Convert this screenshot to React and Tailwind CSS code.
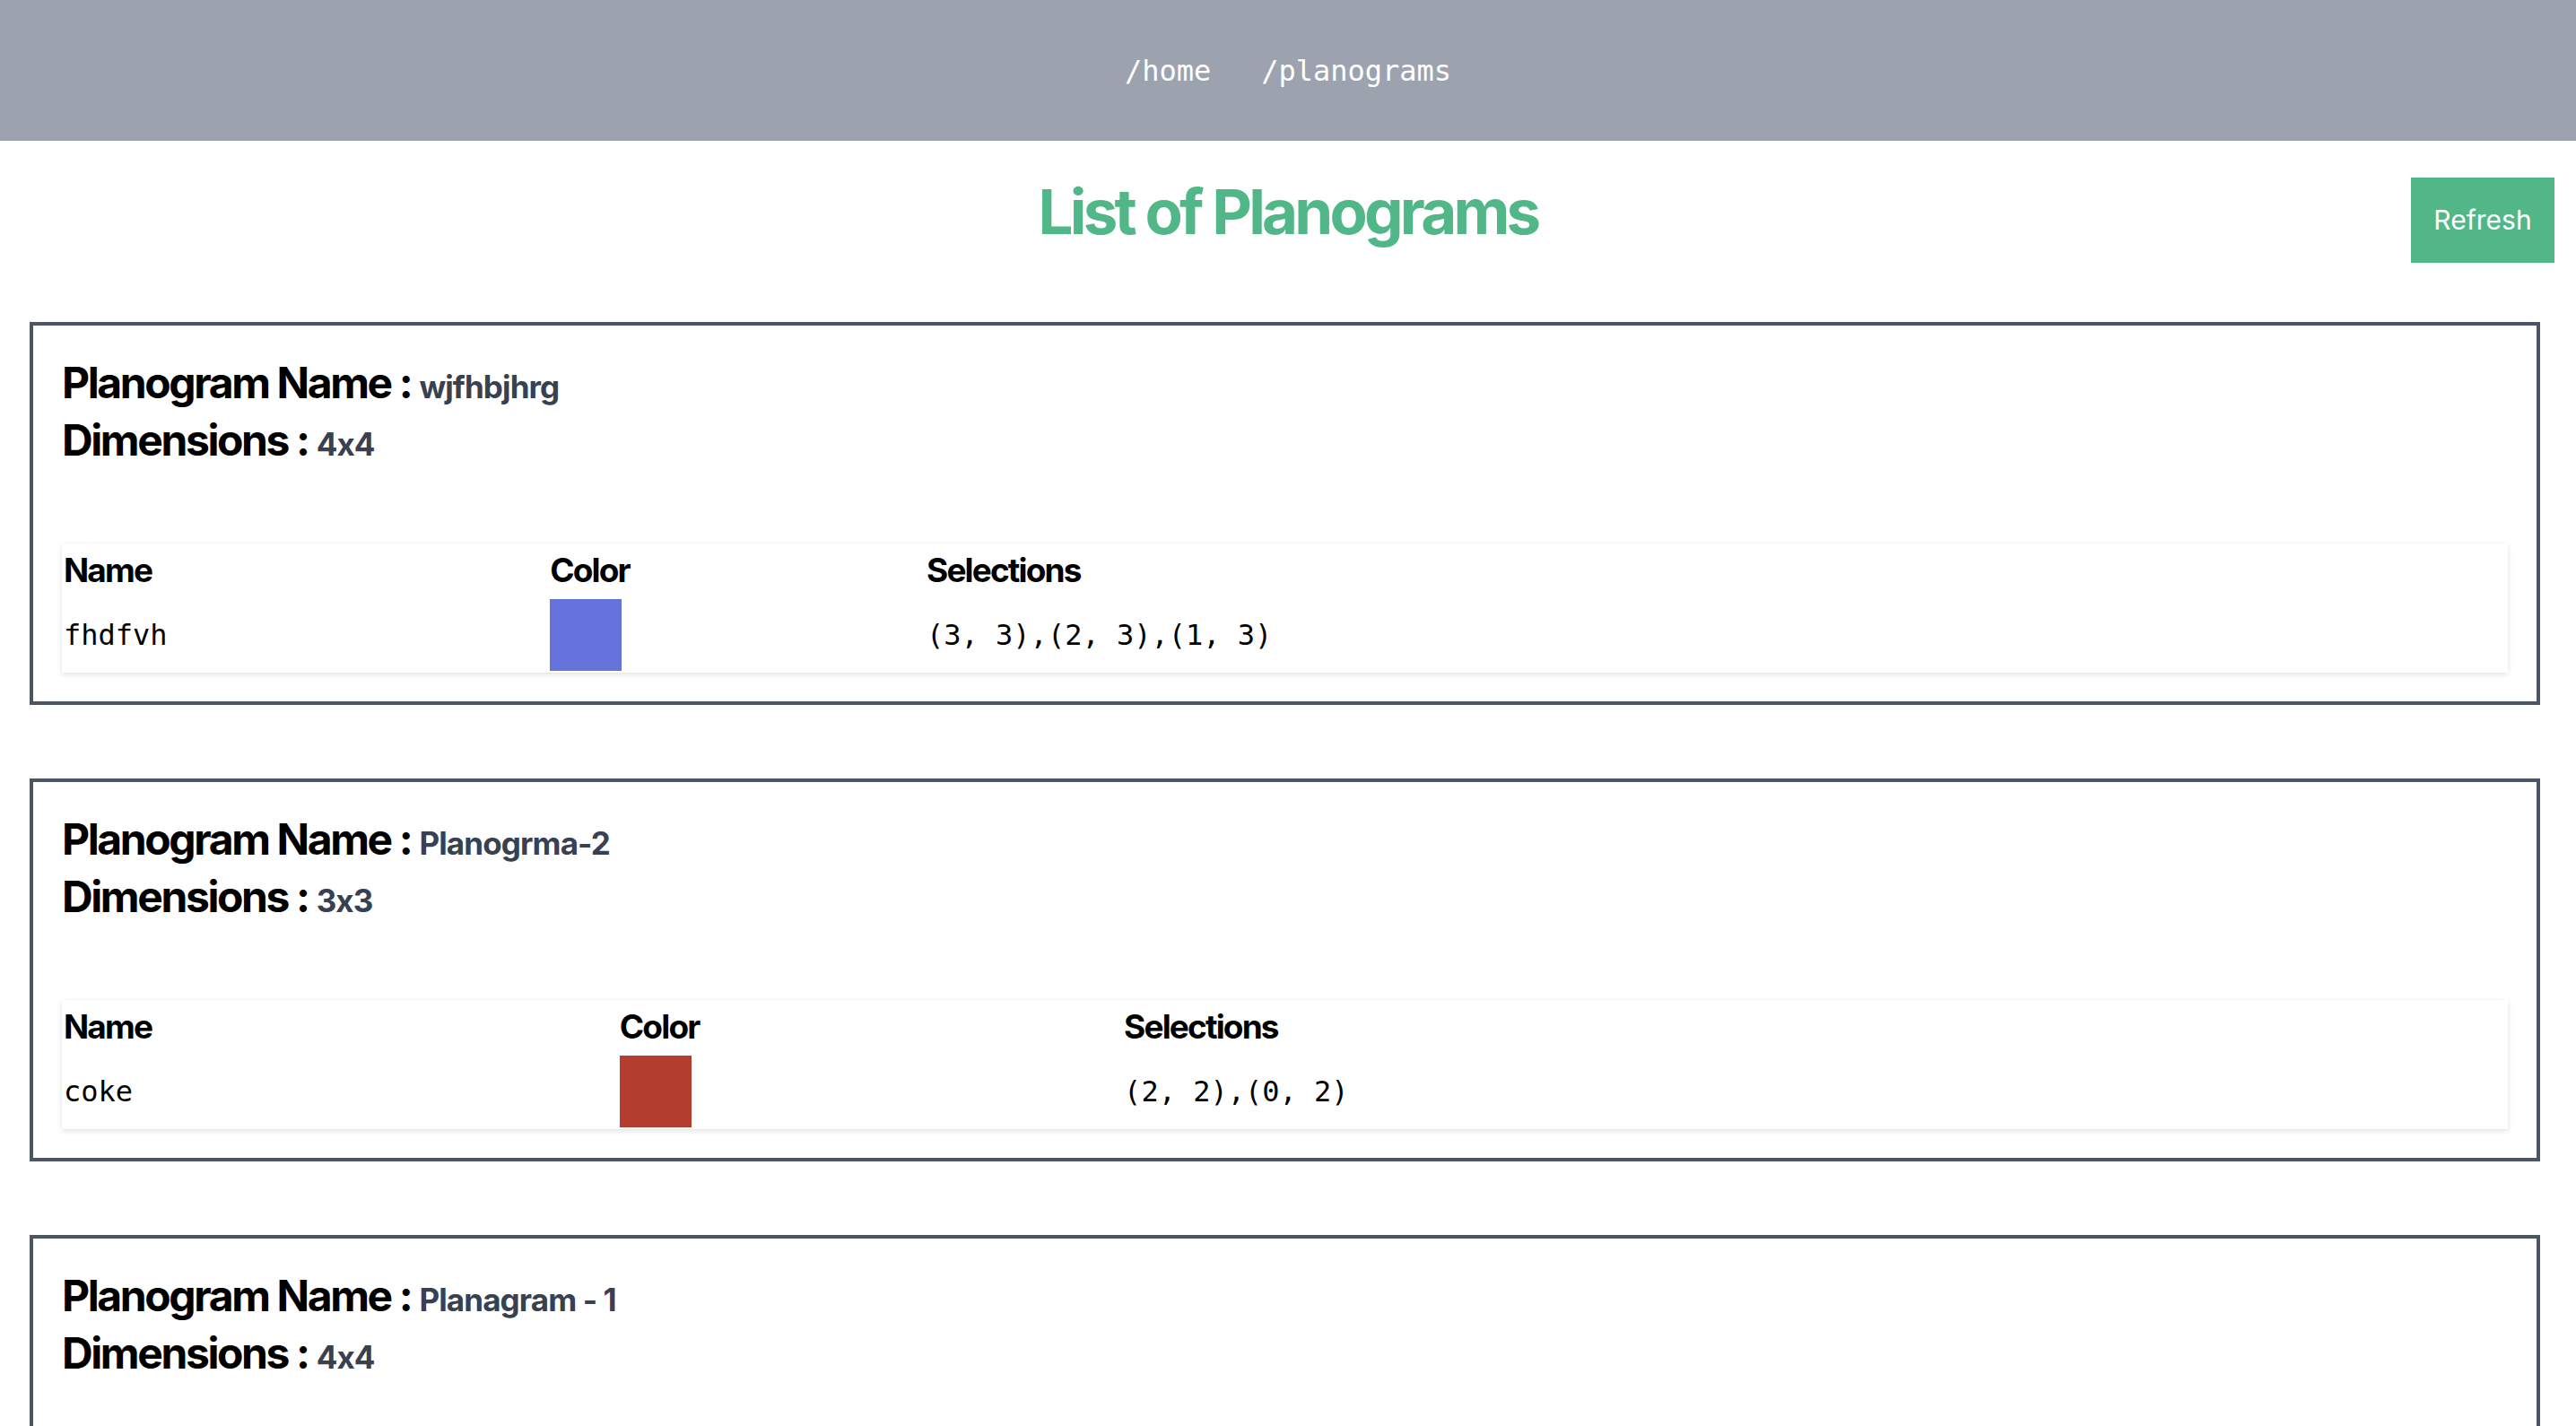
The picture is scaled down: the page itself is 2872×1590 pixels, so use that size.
import React from 'react';

const planograms = [
  {
    name: 'wjfhbjhrg',
    dimensions: '4x4',
    items: [{ name: 'fhdfvh', color: '#6673dd', selections: '(3, 3),(2, 3),(1, 3)' }],
  },
  {
    name: 'Planogrma-2',
    dimensions: '3x3',
    items: [{ name: 'coke', color: '#b33d2f', selections: '(2, 2),(0, 2)' }],
  },
  {
    name: 'Planagram - 1',
    dimensions: '4x4',
    items: [{ name: 'pepsi', color: '#2f6fb3', selections: '(0, 0),(1, 0)' }],
  },
];

const sans = "font-['Inter','Helvetica_Neue',Arial,sans-serif]";
const mono = "font-['DejaVu_Sans_Mono','Liberation_Mono',monospace]";

const PlanogramCard = ({ planogram }) => (
  <div className="ml-[33px] mr-[40px] border-4 border-[#4b5563] p-8">
    <h2 className={`${sans} text-[48px] leading-[64px] font-bold tracking-tighter text-black`}>
      Planogram Name :{' '}
      <span className="text-[35px] leading-none font-bold tracking-tight text-[#374151]">{planogram.name}</span>
    </h2>
    <h2 className={`${sans} text-[48px] leading-[64px] font-bold tracking-tighter text-black`}>
      Dimensions :{' '}
      <span className="text-[35px] leading-none font-bold tracking-tight text-[#374151]">{planogram.dimensions}</span>
    </h2>

    <table className="mt-[83px] w-full bg-white shadow-[0_2px_6px_rgba(0,0,0,0.12)]">
      <thead>
        <tr>
          {['Name', 'Color', 'Selections'].map((h) => (
            <th key={h} className={`${sans} p-[2px] text-left text-[37px] leading-[56px] font-bold tracking-tighter text-black`}>
              {h}
            </th>
          ))}
        </tr>
      </thead>
      <tbody>
        {planogram.items.map((item) => (
          <tr key={item.name}>
            <td className={`${mono} p-[2px] text-[32px] text-black`}>{item.name}</td>
            <td className="p-[2px]">
              <div className="h-[80px] w-[80px]" style={{ backgroundColor: item.color }} />
            </td>
            <td className={`${mono} p-[2px] text-[32px] text-black`}>{item.selections}</td>
          </tr>
        ))}
      </tbody>
    </table>
  </div>
);

export default function App() {
  return (
    <div className="min-h-screen bg-white">
      {/* top nav */}
      <nav className={`${mono} flex h-[157px] items-center justify-center gap-[56px] bg-[#9ca3af] text-[32px] text-white`}>
        <a href="#">/home</a>
        <a href="#">/planograms</a>
      </nav>

      <div className="mt-[41px] grid grid-cols-[1fr_auto_1fr] items-start">
        <h1 className={`${sans} col-start-2 mt-[4px] text-[69px] leading-none font-bold tracking-[-0.055em] text-[#52b788]`}>
          List of Planograms
        </h1>
        <button className={`${sans} mr-[24px] h-[95px] w-[160px] justify-self-end bg-[#52b788] text-[30px] text-white`}>
          Refresh
        </button>
      </div>

      <div className="mt-[66px] flex flex-col gap-[82px] pb-20">
        {planograms.map((p) => (
          <PlanogramCard key={p.name} planogram={p} />
        ))}
      </div>
    </div>
  );
}
